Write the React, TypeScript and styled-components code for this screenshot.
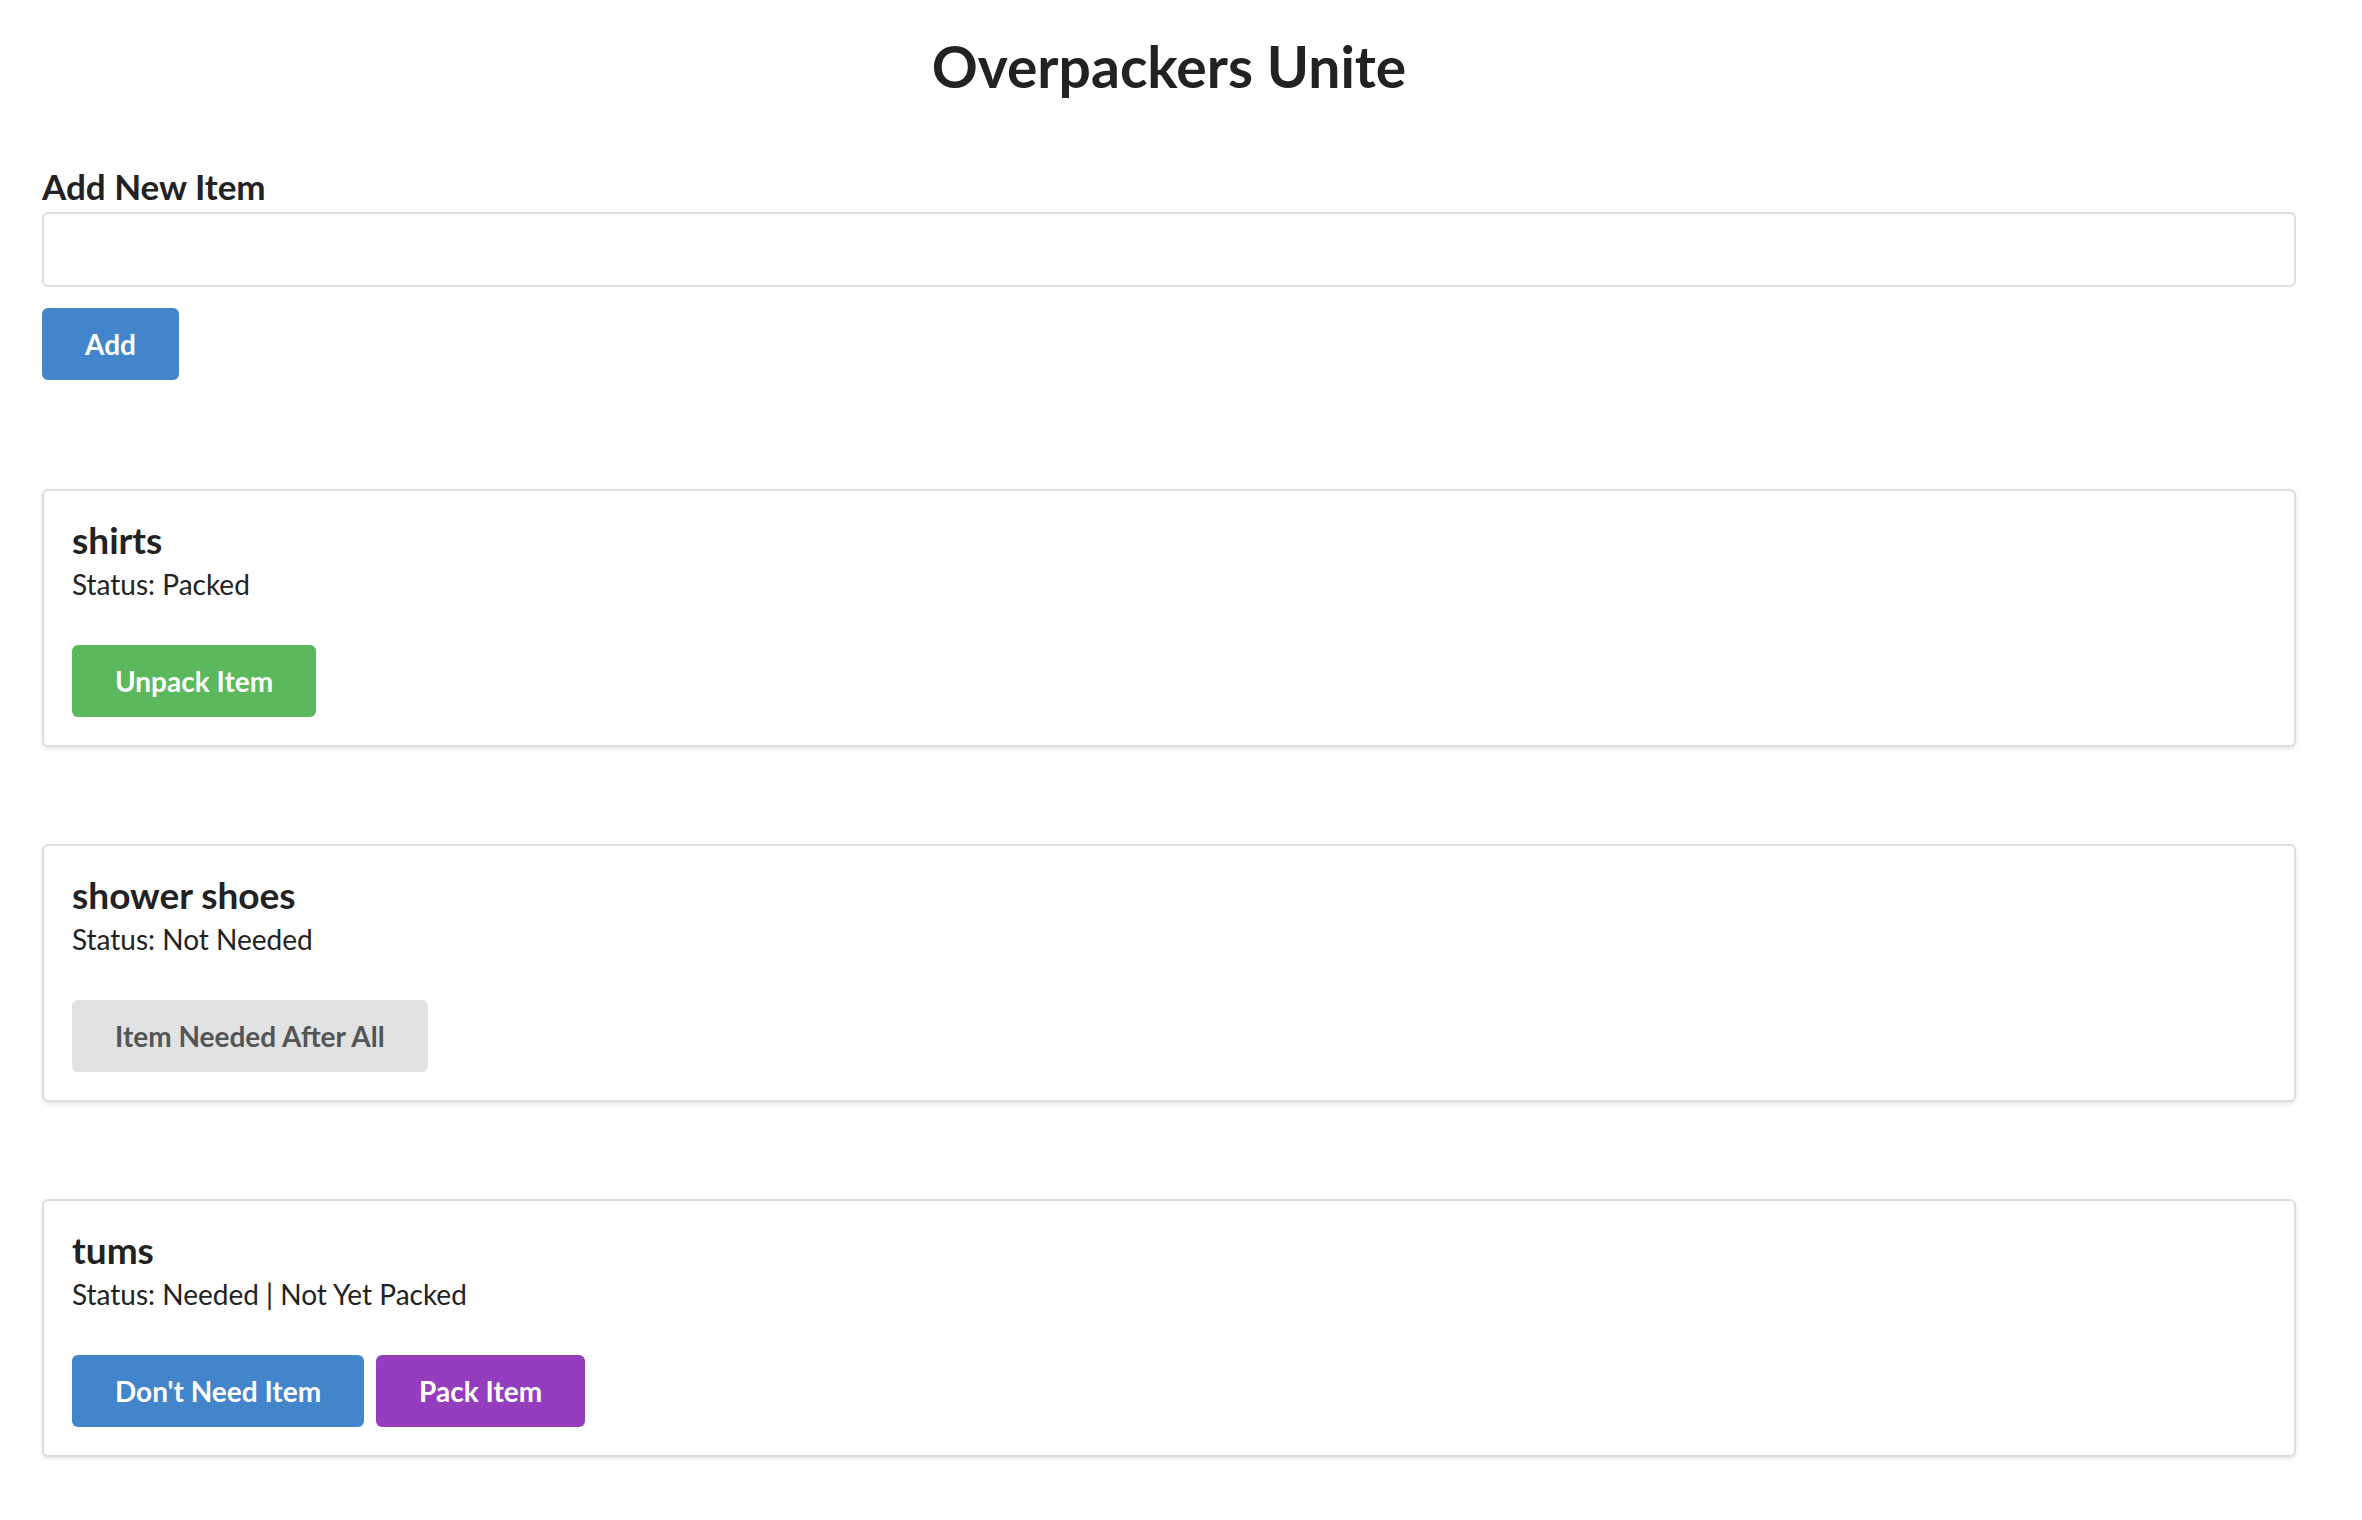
import React, { useState } from "react";
import styled, { createGlobalStyle } from "styled-components";

const GlobalStyle = createGlobalStyle`
  *, *::before, *::after { box-sizing: border-box; }
  html, body { margin: 0; padding: 0; background: #ffffff; }
  body {
    font-family: Lato, "Noto Sans", "Liberation Sans", sans-serif;
    color: #222222;
  }
`;

const Page = styled.div`
  padding: 32px 66px 60px 42px;
`;

const Title = styled.h1`
  margin: 0 0 65px;
  text-align: center;
  font-size: 57px;
  font-weight: 700;
  line-height: 1.2;
  color: #222222;
`;

const AddForm = styled.form`
  display: flex;
  flex-direction: column;
  align-items: flex-start;
`;

const Label = styled.label`
  font-size: 35px;
  font-weight: 700;
  line-height: 1.2;
  margin-bottom: 5px;
`;

const TextInput = styled.input`
  width: 100%;
  height: 75px;
  border: 2px solid #dddddd;
  border-radius: 6px;
  padding: 0 18px;
  font-family: inherit;
  font-size: 28px;
  outline: none;
`;

type Variant = "blue" | "green" | "gray" | "purple";

const palette: Record<Variant, { bg: string; fg: string }> = {
  blue: { bg: "#4285ca", fg: "#ffffff" },
  green: { bg: "#5cb85c", fg: "#ffffff" },
  gray: { bg: "#e1e2e4", fg: "#555555" },
  purple: { bg: "#953dbf", fg: "#ffffff" },
};

const Button = styled.button<{ $variant: Variant }>`
  height: 72px;
  padding: 0 43px;
  border: none;
  border-radius: 6px;
  background: ${(p) => palette[p.$variant].bg};
  color: ${(p) => palette[p.$variant].fg};
  font-family: inherit;
  font-size: 28px;
  font-weight: 700;
  cursor: pointer;
`;

const AddButton = styled(Button)`
  margin-top: 21px;
`;

const List = styled.div`
  margin-top: 109px;
  display: flex;
  flex-direction: column;
  gap: 97px;
`;

const Card = styled.div`
  border: 2px solid #dddddd;
  border-radius: 6px;
  box-shadow: 0 2px 4px rgba(0, 0, 0, 0.1);
  padding: 27px 30px 28px 28px;
  background: #ffffff;
`;

const ItemName = styled.h2`
  margin: 0;
  font-size: 37px;
  font-weight: 700;
  line-height: 1.2;
`;

const Status = styled.p`
  margin: 5px 0 0;
  font-size: 28px;
  font-weight: 400;
  line-height: 1.2;
`;

const Actions = styled.div`
  margin-top: 44px;
  display: flex;
  gap: 12px;
`;

type Item = { name: string; needed: boolean; packed: boolean };

export default function App() {
  const [text, setText] = useState("");
  const [items, setItems] = useState<Item[]>([
    { name: "shirts", needed: true, packed: true },
    { name: "shower shoes", needed: false, packed: false },
    { name: "tums", needed: true, packed: false },
  ]);

  const update = (i: number, patch: Partial<Item>) =>
    setItems((prev) => prev.map((it, j) => (j === i ? { ...it, ...patch } : it)));

  return (
    <>
      <GlobalStyle />
      <Page>
        <Title>Overpackers Unite</Title>
        <AddForm
          onSubmit={(e) => {
            e.preventDefault();
            if (text.trim()) {
              setItems((p) => [...p, { name: text.trim(), needed: true, packed: false }]);
              setText("");
            }
          }}
        >
          <Label htmlFor="new-item">Add New Item</Label>
          <TextInput id="new-item" value={text} onChange={(e) => setText(e.target.value)} />
          <AddButton type="submit" $variant="blue">
            Add
          </AddButton>
        </AddForm>
        <List>
          {items.map((it, i) => (
            <Card key={i}>
              <ItemName>{it.name}</ItemName>
              <Status>
                Status:{" "}
                {it.packed ? "Packed" : it.needed ? "Needed | Not Yet Packed" : "Not Needed"}
              </Status>
              <Actions>
                {it.packed && (
                  <Button $variant="green" onClick={() => update(i, { packed: false })}>
                    Unpack Item
                  </Button>
                )}
                {!it.packed && !it.needed && (
                  <Button $variant="gray" onClick={() => update(i, { needed: true })}>
                    Item Needed After All
                  </Button>
                )}
                {!it.packed && it.needed && (
                  <>
                    <Button $variant="blue" onClick={() => update(i, { needed: false })}>
                      Don't Need Item
                    </Button>
                    <Button $variant="purple" onClick={() => update(i, { packed: true })}>
                      Pack Item
                    </Button>
                  </>
                )}
              </Actions>
            </Card>
          ))}
        </List>
      </Page>
    </>
  );
}
